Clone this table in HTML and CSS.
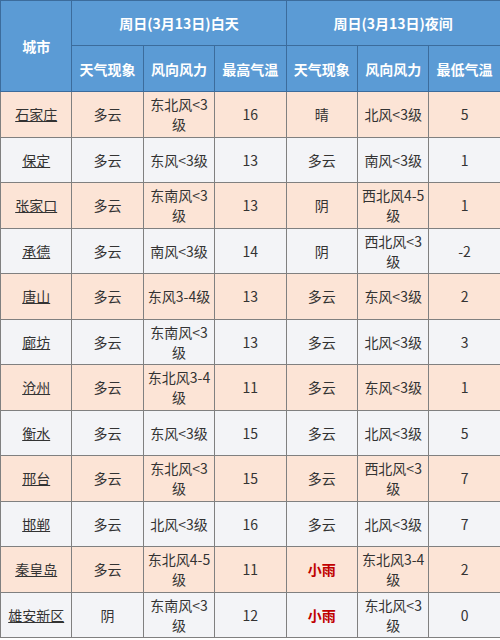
FILE: index.html
```html
<!DOCTYPE html>
<html lang="zh-CN">
<head>
<meta charset="utf-8">
<link rel="stylesheet" href="styles.css">
</head>
<body>
<table class="wx">
<colgroup>
<col class="c"><col class="c"><col class="c"><col class="c"><col class="c"><col class="c"><col class="c">
</colgroup>
<thead>
<tr class="h1">
<th rowspan="2">城市</th>
<th colspan="3">周日(3月13日)白天</th>
<th colspan="3">周日(3月13日)夜间</th>
</tr>
<tr class="h2">
<th>天气现象</th><th>风向风力</th><th>最高气温</th>
<th>天气现象</th><th>风向风力</th><th>最低气温</th>
</tr>
</thead>
<tbody>
<tr class="odd"><td><a class="city">石家庄</a></td><td>多云</td><td>东北风&lt;3级</td><td>16</td><td>晴</td><td>北风&lt;3级</td><td>5</td></tr>
<tr class="even"><td><a class="city">保定</a></td><td>多云</td><td>东风&lt;3级</td><td>13</td><td>多云</td><td>南风&lt;3级</td><td>1</td></tr>
<tr class="odd"><td><a class="city">张家口</a></td><td>多云</td><td>东南风&lt;3级</td><td>13</td><td>阴</td><td>西北风4-5级</td><td>1</td></tr>
<tr class="even"><td><a class="city">承德</a></td><td>多云</td><td>南风&lt;3级</td><td>14</td><td>阴</td><td>西北风&lt;3级</td><td>-2</td></tr>
<tr class="odd"><td><a class="city">唐山</a></td><td>多云</td><td>东风3-4级</td><td>13</td><td>多云</td><td>东风&lt;3级</td><td>2</td></tr>
<tr class="even"><td><a class="city">廊坊</a></td><td>多云</td><td>东南风&lt;3级</td><td>13</td><td>多云</td><td>北风&lt;3级</td><td>3</td></tr>
<tr class="odd"><td><a class="city">沧州</a></td><td>多云</td><td>东北风3-4级</td><td>11</td><td>多云</td><td>东风&lt;3级</td><td>1</td></tr>
<tr class="even"><td><a class="city">衡水</a></td><td>多云</td><td>东风&lt;3级</td><td>15</td><td>多云</td><td>北风&lt;3级</td><td>5</td></tr>
<tr class="odd"><td><a class="city">邢台</a></td><td>多云</td><td>东北风&lt;3级</td><td>15</td><td>多云</td><td>西北风&lt;3级</td><td>7</td></tr>
<tr class="even"><td><a class="city">邯郸</a></td><td>多云</td><td>北风&lt;3级</td><td>16</td><td>多云</td><td>北风&lt;3级</td><td>7</td></tr>
<tr class="odd"><td><a class="city">秦皇岛</a></td><td>多云</td><td>东北风4-5级</td><td>11</td><td class="rain">小雨</td><td>东北风3-4级</td><td>2</td></tr>
<tr class="even"><td><a class="city">雄安新区</a></td><td>阴</td><td>东南风&lt;3级</td><td>12</td><td class="rain">小雨</td><td>东北风&lt;3级</td><td>0</td></tr>
</tbody>
</table>
</body>
</html>
```
FILE: styles.css
```css
html, body {
  margin: 0;
  padding: 0;
  background: #ffffff;
}
body {
  font-family: "Noto Sans CJK SC", "Noto Sans", sans-serif;
  font-size: 14px;
  color: #333333;
}
.wx {
  width: 500px;
  border-collapse: collapse;
  table-layout: fixed;
}
.wx .c {
  width: 71.4px;
}
.wx th {
  background: #5b9bd5;
  color: #ffffff;
  font-weight: bold;
  border: 1px solid #3c6c9c;
  padding: 0 3px;
  text-align: center;
  line-height: 20px;
}
.h1 th {
  height: 44px;
}
.h2 th {
  height: 45px;
}
.wx td {
  border: 1px solid #808080;
  padding: 0 3px;
  text-align: center;
  line-height: 20px;
  height: 44.5px;
}
.odd td {
  background: #fce4d6;
}
.even td {
  background: #f3f4f7;
}
.city {
  color: #333333;
  text-decoration: underline;
}
.rain {
  color: #c00000;
  font-weight: bold;
}
```
